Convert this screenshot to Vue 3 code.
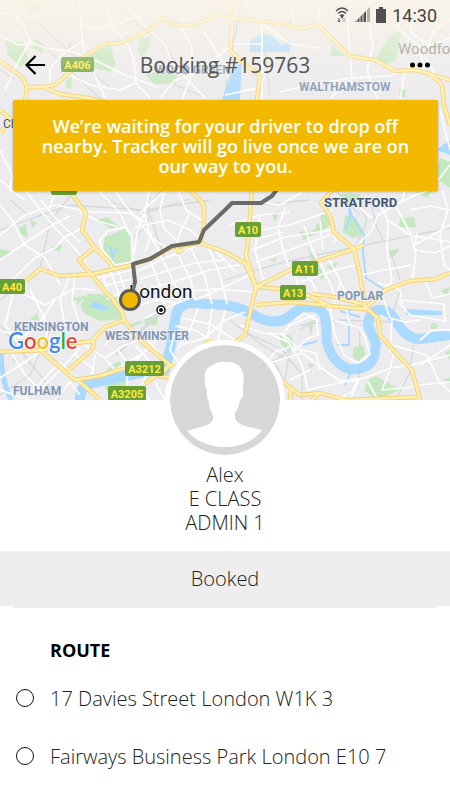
<script setup>
import { ref } from 'vue'

const message = ref(
  'We’re waiting for your driver to drop off nearby. Tracker will go live once we are on our way to you.'
)

const booking = {
  number: '159763',
  status: 'Booked',
  driver: ['Alex', 'E CLASS', 'ADMIN 1'],
  stops: ['17 Davies Street London W1K 3', 'Fairways Business Park London E10 7'],
}

const mainRoads = [
  'M0 61L22 77L27 87L43 87L55 85L70 72L85 56L104 44L120 43L148 31L163 18L175 25L195 25L217 15L240 19L260 21L290 25L300 29L318 24L325 32L350 56L375 60L395 71L415 70L430 74L450 80',
  'M27 87L25 102M43 87L60 94L88 98L122 106',
  'M231 0L232 25L230 50L245 65L260 75L257 100L252 190L248 240L246 255L256 287L253 300L245 335L235 342',
  'M430 74L442 85L444 105L450 125M0 110L12 120L0 133',
  'M70 192L86 213L82 230L95 248L110 263L113 270M95 247L79 260L100 285L113 300L122 312L124 320L140 340L170 365L190 372',
  'M26 281L40 269L60 276L92 274L132 265L150 259L172 247L200 243L225 252L245 263L256 287',
  'M190 190L204 205L204 225L200 243M177 247L178 252L184 249',
  'M256 287L290 270L354 249L364 245M337 185L321 203L330 215L334 232L354 249L360 275L365 307L378 318L380 335L395 352L412 370L420 400',
  'M256 287L280 289L310 296L330 306L365 309L385 290L410 281L435 279L450 273M256 305L290 302L325 305M313 294L335 297L362 304',
  'M0 352L45 350L60 345L92 341L105 327L124 320M40 350L75 380L100 376L125 368M80 382L100 400M94 341L92 350L68 370',
  'M170 365L145 384M170 365L160 376L172 378M205 344L212 340',
  'M283 382L300 395L320 393L345 400L420 397M290 400L291 390M320 393L312 400',
]

const minorRoads = [
  // north west
  'M0 13L15 14L25 28L30 42L45 48L72 52L95 60L125 75L160 88',
  'M0 35L18 45L29 43L15 68L5 90M79 0L81 30L84 52L95 75L105 98M81 25L95 29L122 22L140 16L160 0',
  'M105 0L112 28L127 42L134 60L136 83L120 90L90 85L60 70M136 83L150 98M50 88L50 68L65 52L82 42',
  'M124 0L134 14L152 33L165 46L172 62L190 82L205 98M190 0L180 26L192 46L191 75L182 100',
  'M160 98L175 80L192 75L210 62L228 48M200 25L215 50L230 72',
  // north east
  'M247 0L260 22L290 44L320 48M295 26L290 0M262 21L262 100M225 44L262 44M350 0L348 28L350 56M350 56L352 80L330 98',
  'M318 0L320 24M390 0L400 30L420 48L424 70M365 0L373 45L367 70L377 98M405 71L400 99M450 38L430 45L412 34L406 0',
  'M280 92L310 85L350 78L390 76L410 68M262 87L225 95M450 20L434 30L425 55L436 78',
  // west
  'M0 205L12 220L25 245L45 258L60 284M0 235L25 215L55 205L92 212L130 213L145 222M25 190L42 212L57 230L78 252L90 270',
  'M40 200L62 225L80 242M12 280L35 258L55 248L65 237L82 228M0 260L30 240L52 225L70 216M50 206L57 190M70 275L60 300L65 325',
  'M0 288L20 292L45 305L75 288L95 290M14 290L5 325L20 345M30 290L48 325L45 350M75 275L72 300L80 325M0 330L22 338L38 325L55 300',
  'M10 350L25 375L40 390L60 370L80 348M0 378L20 365L40 352M25 398L45 378L60 362M60 362L80 383M0 390L30 400M55 400L70 382L80 395',
  'M85 345L105 358L125 345L140 340M105 358L115 370L140 355L150 347M95 355L92 375M120 330L105 345M75 354L92 368',
  // central grid
  'M100 240L108 231L125 227L132 235L133 262L115 265L102 250Z',
  'M80 212L100 222L116 226M116 192L125 205L138 220L150 236L160 252M98 190L120 213L130 235M150 190L145 212L137 232L134 255',
  'M145 215L150 237L170 250M140 213L162 193M135 227L150 224L168 220L190 230L202 240M165 190L160 210L164 228L176 240',
  'M178 190L186 210L205 222M189 215L180 232L177 243M145 252L152 232M110 270L121 300M117 267L128 298M103 275L110 300M94 279L133 270',
  'M98 287L136 278M106 299L125 292M138 271L165 258L195 247M140 279L163 272L195 263L225 260M137 292L170 283L210 270L240 265',
  'M150 260L158 280L164 304M160 255L175 284L180 302M175 249L190 278L195 300M190 247L204 275L212 304M208 246L220 275L227 304',
  'M195 300L225 287L250 275M180 292L215 289L255 292M165 308L190 298M142 305L155 300L177 303M145 318L160 310M210 245L236 272',
  // south of the river
  'M175 326L195 330L220 346M182 318L210 324L235 340M198 308L190 330L177 350M212 308L208 336M225 310L218 340M180 345L205 338L225 320L245 312',
  'M150 347L162 335M135 345L155 367M145 337L158 352M118 350L132 370M140 356L128 372L126 390M150 367L140 388L150 400M155 382L165 400',
  'M175 332L170 350L184 372M240 325L262 333L283 334L290 325L315 315M283 334L305 355L320 367L340 381L365 378L390 368L412 365L450 355',
  'M280 333L292 347L302 365L308 390L320 387L345 382L360 380M295 350L308 338L318 335L317 320L304 313L295 320M294 348L316 353L320 370',
  'M265 364L280 360L303 353M250 345L265 364L275 352L290 347M268 333L290 343M290 380L310 370M358 380L352 392L340 398M390 370L382 390L405 388L420 385',
  'M330 308L335 335L345 356L358 363L370 354L364 335L359 328M335 320L348 325L362 328M347 310L350 325M365 310L375 300L383 298L390 318L405 322L420 320',
  'M399 303L410 315L445 321L444 304L399 300M392 318L390 352L392 345L427 355L438 380L450 392M394 352L390 368M420 340L432 330L450 330',
  'M420 365L450 345M420 385L450 382M350 400L358 382M378 400L368 382',
  // east
  'M233 240L260 230L290 225L333 210M230 225L260 215L290 212M252 250L285 237L332 230M256 262L295 248L332 234M260 215L255 250L263 280',
  'M285 208L278 228L283 250L290 270M304 226L312 248L317 260M320 220L323 250M333 232L336 242M260 202L280 205L302 192M260 238L282 232',
  'M293 270L303 300M300 266L312 282L322 304M320 262L332 288L335 305M328 258L340 280L337 298M300 282L335 270L356 265',
  'M354 249L372 230L378 215L395 205L415 195L430 190M372 218L360 208L356 198M380 205L388 220L410 235L450 242M395 205L410 232L416 255L412 280',
  'M388 220L387 250L392 280L386 292M360 275L385 270L412 265M417 233L415 245L450 225M442 190L448 210L440 235L444 265L450 270',
  'M402 202L405 190M410 210L430 206L450 210M378 283L400 290L402 304M425 280L432 298L450 294M340 280L347 298M415 250L435 253L450 246',
  'M440 110L450 150M438 180L450 165M0 150L12 175L10 190L25 200M0 180L12 190',
]

const railways = [
  'M0 12L40 25L110 88M37 40L102 100M120 10L158 40L190 80M160 60L175 85L205 97M270 95L265 50M0 230L70 205L145 210L210 200M0 70L15 80',
  'M10 200L28 215M105 200L145 213L190 199M0 300L40 270L50 222L75 190M150 192L148 225L130 240M150 215L165 260M145 210L162 190M0 325L20 350L60 400',
  'M247 333L283 350L302 375L302 400M230 320L262 345L292 363M301 325L340 320L390 322L400 290M225 280L255 270L285 262L350 248L450 228',
  'M350 192L367 220L356 247M372 205L376 225L383 240M335 190L360 215M390 250L400 280M360 325L359 380M413 345L410 372L396 400M273 360L293 395',
  'M0 395L30 375L50 330M115 355L165 310M120 352L160 310M260 370L290 350L285 380M300 330L315 320M255 205L310 200',
]

const parks = [
  'M22 0L45 5L30 14Z', 'M35 38L45 45L42 55L32 47Z', 'M5 41L24 42L28 60L20 67L8 55Z',
  'M68 45L72 43L70 53L66 50Z', 'M82 57L110 45L116 65L110 72L90 67Z', 'M139 38L150 37L150 45L142 57L138 52Z',
  'M145 75L165 70L177 75L175 84L155 84Z', 'M66 80L72 77L71 89L66 87Z', 'M124 22L133 20L128 26Z',
  'M430 42L437 40L437 48L429 49Z', 'M390 35L402 30L396 60L386 65L375 60Z', 'M332 45L345 56L330 56Z', 'M400 88L406 90L405 98L399 95Z',
  'M225 80L237 84L233 96L225 90Z', 'M440 158L450 162L450 188L436 178Z',
  'M105 237L125 229L130 237L131 261L115 264L103 249Z', 'M96 220L108 217L117 225L112 229Z',
  'M19 228L26 224L28 238L20 234Z', 'M30 219L37 223L32 228Z', 'M52 247L62 244L60 251L53 250Z', 'M0 249L14 252L0 258Z',
  'M80 305L88 294L116 295L122 319L100 321L84 313Z', 'M68 299L98 294L104 298L72 300Z', 'M129 325L140 321L143 323L132 327Z',
  'M144 319L158 315L157 325L145 325Z', 'M98 378L112 365L120 361L126 385L106 386Z', 'M104 386L126 385L108 393Z', 'M12 360L20 358L14 362Z', 'M30 320L37 313L39 320Z',
  'M303 237L315 229L325 208L330 225L322 231L303 240Z', 'M345 215L356 218L364 234L352 238L343 232Z', 'M340 194L360 194L363 208L347 204Z',
  'M272 214L280 210L275 222Z', 'M299 233L306 230L304 238Z', 'M400 218L414 217L416 227L399 227Z', 'M389 250L399 249L395 256L390 257Z',
  'M307 246L315 258L324 275L322 280L315 270Z', 'M326 266L338 262L333 272Z', 'M270 259L278 258L274 262Z', 'M441 290L450 287L447 296Z',
  'M308 323L314 320L311 335ZM279 335L291 335L294 345L288 351L281 344Z', 'M307 363L315 365L310 368Z',
  'M353 348L363 345L365 355L358 361L353 357Z', 'M431 323L437 323L437 331L431 330Z', 'M368 380L376 376L400 390L376 400L364 390Z',
  'M445 352L450 350L450 360ZM443 379L450 378L450 384Z', 'M76 299L82 300L78 304Z', 'M415 192L432 190L428 198Z',
]

const areas = [
  { name: 'WOOD GREEN', x: 155, y: 74 },
  { name: 'WALTHAMSTOW', x: 299, y: 91 },
  { name: 'KENSINGTON', x: 14, y: 331 },
  { name: 'WESTMINSTER', x: 105, y: 340 },
  { name: 'FULHAM', x: 13, y: 395 },
  { name: 'POPLAR', x: 337, y: 300 },
]

const shields = [
  { name: 'A406', x: 61, y: 57, w: 33 },
  { name: 'A10', x: 235, y: 222, w: 26 },
  { name: 'A11', x: 292, y: 261, w: 26 },
  { name: 'A13', x: 280, y: 285, w: 26 },
  { name: 'A40', x: -1, y: 279, w: 26 },
  { name: 'A3212', x: 125, y: 361, w: 39 },
  { name: 'A3205', x: 108, y: 386, w: 38 },
]

const routePath = 'M278 188L272 196L261 203L232 203L225 210L204 230L199 242L172 246L150 259L133 264L135 282L130 300'
</script>

<template>
  <main class="tracker">
    <section class="hero">
      <svg class="map" viewBox="0 0 450 400" preserveAspectRatio="xMidYMid slice" aria-label="Map of London">
        <defs>
          <linearGradient id="fade" x1="0" y1="0" x2="0" y2="1">
            <stop offset="0" stop-color="#fbf5e8" stop-opacity=".9" />
            <stop offset=".5" stop-color="#faf5ec" stop-opacity=".35" />
            <stop offset="1" stop-color="#faf6f0" stop-opacity="0" />
          </linearGradient>
        </defs>
        <rect width="450" height="400" fill="#ecebed" />
        <path v-for="d in parks" :key="d" :d="d" class="park" />
        <path v-for="d in railways" :key="d" :d="d" class="rail" />
        <g class="water">
          <path class="thames" d="M80 400Q80 385 92 383L120 377L150 371L165 370L171 345L176 314Q179 305 190 303L225 305Q244 308 257 317Q278 327 291 315Q304 304 317 308Q326 312 326 325L327 342Q331 361 348 369Q368 371 374 357L376 344L368 325Q369 309 382 310Q390 310 397 323Q407 339 420 339L450 335" />
          <path d="M1 350Q1 380 11 400" />
          <path class="thames-thin" d="M242 0L232 50L237 75L230 100M236 65L226 100M348 205L352 216L364 235L363 252L366 278L385 290M349 309L349 345L337 345M340 311L360 317M303 345L317 341M352 370L345 385M349 206L350 218L345 230M109 246L113 252L118 249" />
        </g>
        <path class="lake" d="M250 41L262 33L272 36L282 45L290 40L290 52L250 52ZM230 75L242 60L240 100L222 100ZM89 307L94 301L108 307L107 311ZM110 249L113 252L117 248L112 260ZM406 309L442 311L442 315L406 315ZM436 150L450 140L450 155Z" />
        <path v-for="d in minorRoads" :key="d" :d="d" class="road" />
        <path v-for="d in mainRoads" :key="d" :d="d" class="main-road-edge" />
        <path v-for="d in mainRoads" :key="d" :d="d" class="main-road" />

        <text v-for="area in areas" :key="area.name" :x="area.x" :y="area.y" class="area">{{ area.name }}</text>
        <text x="324" y="207" class="area area--dark">STRATFORD</text>
        <text x="3" y="128" class="area area--small">CHILDS HILL</text>
        <text x="398" y="54" class="town">Woodford</text>
        <g v-for="shield in shields" :key="shield.name">
          <rect :x="shield.x" :y="shield.y" :width="shield.w" height="15" rx="2" class="shield" />
          <text :x="shield.x + shield.w / 2" :y="shield.y + 12" class="shield-text">{{ shield.name }}</text>
        </g>
        <rect x="51" y="180" width="26" height="15" rx="2" class="shield" />
        <rect width="450" height="110" fill="url(#fade)" />

        <path :d="routePath" class="route-line" />
        <text x="129" y="298" class="city">London</text>
        <circle cx="161" cy="310" r="4" fill="#fff" stroke="#111" stroke-width="1.5" />
        <circle cx="161" cy="310" r="2" fill="#111" />
        <circle cx="130" cy="300" r="9.5" fill="#f2b800" stroke="#595959" stroke-width="3" />
        <text x="8" y="349" class="google">
          <tspan fill="#4285f4">G</tspan><tspan fill="#ea4335">o</tspan><tspan fill="#fbbc05">o</tspan><tspan fill="#4285f4">g</tspan><tspan fill="#34a853">l</tspan><tspan fill="#ea4335">e</tspan>
        </text>
      </svg>

      <div class="status-bar">
        <svg width="14" height="18" viewBox="0 0 14 18" aria-hidden="true">
          <g fill="none" stroke="#505050" stroke-width="1.4">
            <path d="M1 5Q7 -1 13 5M3 7.500Q7 3.500 11 7.500M5 10Q7 8 9 10" />
          </g>
          <circle cx="7" cy="11" r="1.200" fill="#505050" />
          <path d="M4 12V16M2.500 14.500L4 16L5.500 14.500" fill="none" stroke="#505050" />
          <path d="M9 16.500V12.500M7.500 14L9 12.500L10.500 14" fill="none" stroke="#aaa" />
        </svg>
        <svg width="15" height="16" viewBox="0 0 15 16" aria-hidden="true">
          <path d="M0 15L11 4V15Z" fill="#505050" />
          <path d="M2 0V16M5 0V16M8 0V16" stroke="#f3eee6" />
          <path d="M12 15V3L15 0V15Z" fill="#b5b2ae" />
        </svg>
        <svg width="10" height="16" viewBox="0 0 10 16" aria-hidden="true">
          <path d="M3 0H7V2H10V16H0V2H3Z" fill="#505050" />
        </svg>
        <time class="clock">14:30</time>
      </div>

      <header class="nav">
        <button class="nav__button" type="button" aria-label="Back">
          <svg width="20" height="20" viewBox="0 0 20 20" fill="none" stroke="#000" stroke-width="2.2">
            <path d="M20 10H2M10.500 1L1.500 10L10.500 19" />
          </svg>
        </button>
        <h1 class="nav__title">Booking #{{ booking.number }}</h1>
        <button class="nav__button" type="button" aria-label="More options">
          <svg width="20" height="6" viewBox="0 0 20 6">
            <circle cx="2.500" cy="3" r="2.500" />
            <circle cx="10" cy="3" r="2.500" />
            <circle cx="17.500" cy="3" r="2.500" />
          </svg>
        </button>
      </header>

      <p class="banner" role="status">{{ message }}</p>
    </section>

    <section class="driver">
      <svg class="driver__photo" viewBox="0 0 110 110" aria-label="Driver photo">
        <circle cx="55" cy="55" r="55" fill="#d7d7d7" />
        <path
          fill="#fff"
          d="M43 20C47 16 61 16 66 19C73 22 75 31 73 43L73 49C73 52 72 54 70 55C69 61 67 66 65 68C64 75 67 78 75 81L92 85C83 97 70 102 55 102C39 102 26 96 17 86L34 81C42 78 45 75 42 68C40 65 39 61 39 57C37 55 37 51 37 46C33 34 33 23 43 20Z"
        />
      </svg>
      <p v-for="line in booking.driver" :key="line" class="driver__line">{{ line }}</p>
    </section>

    <p class="state">{{ booking.status }}</p>

    <section class="route">
      <h2 class="route__title">ROUTE</h2>
      <ol class="route__stops">
        <li v-for="stop in booking.stops" :key="stop" class="route__stop">
          <span class="route__dot"></span>
          <span>{{ stop }}</span>
        </li>
      </ol>
    </section>
  </main>
</template>

<style>
body {
  margin: 0;
  background: #fff;
}
</style>

<style scoped>
.tracker {
  min-height: 100vh;
  background: #fff;
  color: #222;
  font-family: 'Open Sans', 'Noto Sans', sans-serif;
  font-size: 20px;
  font-weight: 300;
}

.tracker p,
.tracker h1,
.tracker h2 {
  margin: 0;
}

.hero {
  position: relative;
  height: 400px;
  overflow: hidden;
}

.map {
  position: absolute;
  inset: 0;
  width: 100%;
  height: 100%;
  font-family: Roboto, sans-serif;
  font-weight: 400;
}

.park {
  fill: #c5e8c0;
}

.rail {
  fill: none;
  stroke: #d5d9dc;
  stroke-width: 1.3;
}

.water {
  fill: none;
  stroke: #aadaff;
  stroke-width: 5;
}

.thames {
  stroke-width: 10;
  stroke-linejoin: round;
}

.thames-thin {
  stroke-width: 2;
}

.lake {
  fill: #aadaff;
}

.road {
  fill: none;
  stroke: #fff;
  stroke-width: 1.7;
  stroke-linejoin: round;
}

.main-road-edge,
.main-road {
  fill: none;
  stroke: #f5d077;
  stroke-width: 4.4;
  stroke-linejoin: round;
}

.main-road {
  stroke: #fff0ad;
  stroke-width: 2.6;
}

.area {
  fill: #8195b2;
  stroke: #f4f4f6;
  stroke-width: 1;
  paint-order: stroke;
  font-size: 12px;
  font-weight: 700;
}

.area--dark {
  fill: #43566f;
  font-size: 13px;
}

.area--small {
  fill: #43566f;
  font-weight: 400;
}

.town {
  fill: #86888a;
  font-size: 15px;
}

.city {
  fill: #111;
  stroke: #fff;
  stroke-width: 1;
  paint-order: stroke;
  font-size: 19px;
}

.shield {
  fill: #689f38;
}

.shield-text {
  fill: #ffeb3b;
  font-size: 11px;
  font-weight: 700;
  text-anchor: middle;
}

.route-line {
  fill: none;
  stroke: #555;
  stroke-opacity: 0.85;
  stroke-width: 4;
  stroke-linejoin: round;
}

.google {
  stroke: #fff;
  stroke-width: 2;
  paint-order: stroke;
  font-family: Lato, sans-serif;
  font-size: 22px;
  font-weight: 600;
}

.status-bar,
.nav,
.banner {
  position: relative;
}

.status-bar {
  display: flex;
  align-items: center;
  justify-content: flex-end;
  gap: 6px;
  height: 30px;
  padding-right: 13px;
}

.clock {
  color: #444;
  font-family: Roboto, sans-serif;
  font-size: 18px;
  font-weight: 400;
}

.nav {
  display: flex;
  align-items: center;
  justify-content: space-between;
  height: 70px;
  padding: 0 20px 0 25px;
}

.nav__button {
  display: flex;
  align-items: center;
  padding: 0;
  border: 0;
  background: none;
  cursor: pointer;
}

.nav__title {
  flex: 1;
  padding-right: 5px;
  color: #555;
  font-size: 21px;
  font-weight: 500;
  text-align: center;
}

.banner {
  margin: 0 12px 0 13px !important;
  padding: 16px 20px 15px;
  border-radius: 2px;
  background: #f2b900;
  box-shadow: 0 1px 3px rgba(0, 0, 0, 0.25);
  color: #fff;
  font-size: 18px;
  font-weight: 600;
  line-height: 20px;
  text-align: center;
}

.driver {
  position: relative;
  display: flex;
  flex-direction: column;
  align-items: center;
  margin-top: -60px;
  padding-bottom: 16px;
}

.driver__photo {
  width: 110px;
  height: 110px;
  margin-bottom: 3px;
  border: 5px solid #fff;
  border-radius: 50%;
  background: #fff;
}

.driver__line {
  line-height: 24px;
}

.state {
  background: #eee;
  line-height: 55px;
  text-align: center;
}

.route {
  padding: 0 13px;
}

.route::before {
  content: '';
  display: block;
  height: 2px;
  background: #eee;
}

.route__title {
  padding: 28px 0 5px 37px;
  color: #000;
  font-size: 18px;
  font-weight: 700;
  line-height: 28px;
}

.route__stops {
  margin: 0;
  padding: 0;
  list-style: none;
}

.route__stop {
  display: flex;
  align-items: center;
  gap: 16px;
  min-height: 58px;
  padding-left: 3px;
}

.route__dot {
  flex: none;
  box-sizing: border-box;
  width: 18px;
  height: 18px;
  border: 1px solid #111;
  border-radius: 50%;
}
</style>
